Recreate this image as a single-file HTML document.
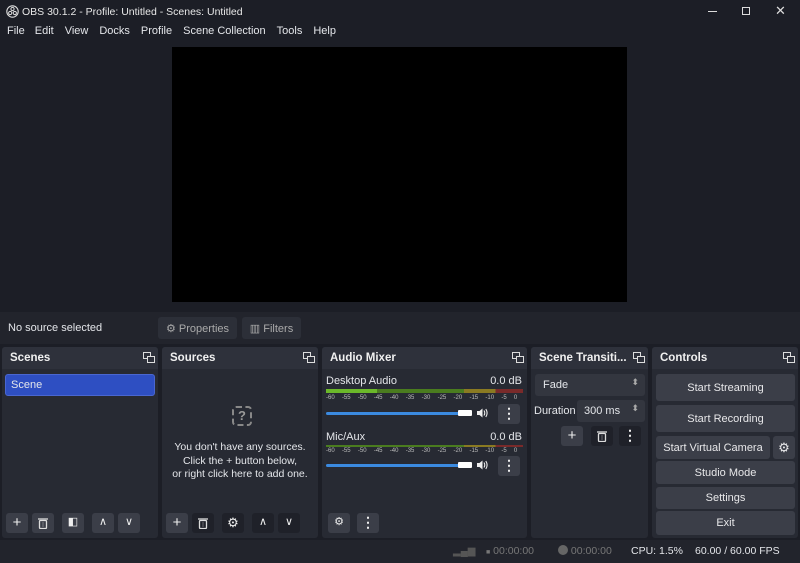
<!DOCTYPE html>
<html><head><meta charset="utf-8"><style>
*{margin:0;padding:0;box-sizing:border-box}
body{width:800px;height:563px;background:#1c1e26;font-family:"Liberation Sans",sans-serif;color:#e4e6ea;font-size:11px;position:relative;overflow:hidden}
.a{position:absolute}
.dock{position:absolute;top:347px;height:191px;background:#272a33;border-radius:3px}
.hd{position:absolute;left:0;right:0;top:0;height:22px;background:#2e313b;border-radius:3px 3px 0 0;font-weight:bold;font-size:11.5px;padding:5px 0 0 8px;color:#f0f0f0}
.btn{position:absolute;background:#3b3e48;border-radius:3px;text-align:center;color:#e8e8ea;font-size:11px}
.ib{position:absolute;width:22px;height:20px;background:#3b3e48;border-radius:3px;color:#eee;text-align:center;font-size:15px;line-height:19px}
.ib.d{background:#1f2129}
.ib svg{position:absolute;left:5px;top:4px}
.sc{font-size:6px;color:#bbb}
</style></head><body>
<svg width="0" height="0" style="position:absolute"><defs>
<g id="f"><rect x="0.5" y="0.5" width="7" height="6" fill="none" stroke="#ddd"/><rect x="4.5" y="4.5" width="7" height="6" fill="#2e313b" stroke="#ddd"/></g>
<g id="t"><rect x="2.5" y="3.5" width="7" height="8" rx="1" fill="none" stroke="#ddd" stroke-width="1.3"/><line x1="1" y1="2" x2="11" y2="2" stroke="#ddd" stroke-width="1.3"/><line x1="6" y1="5" x2="6" y2="10" stroke="#ddd" stroke-width="0.8" opacity="0.5"/></g>
<g id="s"><path d="M1 4h2.5l3-2.5v9l-3-2.5H1z" fill="#eee"/><path d="M8 3.5q1.5 2.5 0 5M9.8 2q2.6 4 0 8" fill="none" stroke="#eee" stroke-width="1.1"/></g>
</defs></svg>
<!-- title -->
<svg class="a" style="left:6px;top:5px" width="13" height="13" viewBox="0 0 13 13"><circle cx="6.5" cy="6.5" r="5.7" fill="none" stroke="#ddd" stroke-width="1.1"/><circle cx="6.5" cy="4" r="1.6" fill="none" stroke="#ddd"/><circle cx="4.2" cy="8" r="1.6" fill="none" stroke="#ddd"/><circle cx="8.8" cy="8" r="1.6" fill="none" stroke="#ddd"/></svg>
<div class="a" style="left:22px;top:6px;font-size:10.5px;color:#e8e8e8">OBS 30.1.2 - Profile: Untitled - Scenes: Untitled</div>
<div class="a" style="left:708px;top:11px;width:9px;height:1px;background:#ddd"></div>
<div class="a" style="left:742px;top:7px;width:8px;height:8px;border:1px solid #ddd"></div>
<div class="a" style="left:775px;top:3px;font-size:13px;color:#ddd">✕</div>
<!-- menu -->
<div class="a" style="top:25px;left:7px;font-size:11px">
<span style="margin-right:10px">File</span><span style="margin-right:11px">Edit</span><span style="margin-right:11px">View</span><span style="margin-right:11px">Docks</span><span style="margin-right:11px">Profile</span><span style="margin-right:11px">Scene Collection</span><span style="margin-right:11px">Tools</span><span>Help</span></div>
<div class="a" style="left:172px;top:47px;width:455px;height:255px;background:#000"></div>
<!-- source bar -->
<div class="a" style="left:0;top:312px;width:800px;height:32px;background:#22242c"></div>
<div class="a" style="left:8px;top:322px">No source selected</div>
<div class="btn" style="left:158px;top:317px;width:79px;height:22px;background:#2c2f38;padding-top:5px;color:#aaa">⚙ Properties</div>
<div class="btn" style="left:242px;top:317px;width:59px;height:22px;background:#2c2f38;padding-top:5px;color:#aaa">▥ Filters</div>
<!-- Scenes -->
<div class="dock" style="left:2px;width:156px"><div class="hd">Scenes</div>
<div class="a" style="left:3px;top:27px;width:150px;height:22px;background:#2e4fc2;border-radius:3px;padding:4px 0 0 5px;border:1px solid #4a67d0">Scene</div>
<div class="ib" style="left:4px;top:166px">+</div><div class="ib" style="left:30px;top:166px"><svg width="12" height="12"><use href="#t"/></svg></div><div class="ib" style="left:60px;top:166px;font-size:11px">◧</div><div class="ib" style="left:90px;top:166px;font-size:11px">∧</div><div class="ib" style="left:116px;top:166px;font-size:11px">∨</div>
</div>
<!-- Sources -->
<div class="dock" style="left:162px;width:156px"><div class="hd">Sources</div>
<div class="a" style="left:70px;top:59px;width:20px;height:20px;border:2px dashed #888;border-radius:4px;color:#999;text-align:center;font-weight:bold;font-size:13px;line-height:16px">?</div>
<div class="a" style="left:0;width:156px;top:94px;text-align:center;line-height:13.5px;font-size:10.5px">You don't have any sources.<br>Click the + button below,<br>or right click here to add one.</div>
<div class="ib" style="left:4px;top:166px">+</div><div class="ib d" style="left:30px;top:166px"><svg width="12" height="12"><use href="#t"/></svg></div><div class="ib d" style="left:60px;top:166px;font-size:13px">⚙</div><div class="ib d" style="left:90px;top:166px;font-size:11px">∧</div><div class="ib d" style="left:116px;top:166px;font-size:11px">∨</div>
</div>
<!-- Audio mixer -->
<div class="dock" style="left:322px;width:205px"><div class="hd">Audio Mixer</div>
<div class="a" style="left:4px;top:28px">Desktop Audio</div><div class="a" style="right:5px;top:28px">0.0 dB</div>
<div class="a" style="left:4px;top:42px;width:197px;height:4px;background:linear-gradient(90deg,#6bb82a 0,#6bb82a 26%,#4a7c1f 26%,#4a7c1f 70%,#8a7a22 70%,#8a7a22 86%,#7a2a2a 86%)"></div>
<div class="a sc" style="left:4px;top:48px;width:200px;word-spacing:5.6px">-60 -55 -50 -45 -40 -35 -30 -25 -20 -15 -10 -5 0</div>
<div class="a" style="left:4px;top:65px;width:135px;height:3px;background:#3b8ae0;border-radius:2px"></div>
<div class="a" style="left:136px;top:63px;width:14px;height:6px;background:#fff;border-radius:1px"></div>
<svg class="a" style="left:154px;top:60px" width="13" height="12"><use href="#s"/></svg>
<div class="ib" style="left:176px;top:57px;font-size:14px;font-weight:bold">⋮</div>
<div class="a" style="left:4px;top:84px">Mic/Aux</div><div class="a" style="right:5px;top:84px">0.0 dB</div>
<div class="a" style="left:4px;top:98px;width:197px;height:2px;background:linear-gradient(90deg,#4a7c1f 70%,#8a7a22 70%,#8a7a22 86%,#7a2a2a 86%)"></div>
<div class="a sc" style="left:4px;top:101px;width:200px;word-spacing:5.6px">-60 -55 -50 -45 -40 -35 -30 -25 -20 -15 -10 -5 0</div>
<div class="a" style="left:4px;top:117px;width:135px;height:3px;background:#3b8ae0;border-radius:2px"></div>
<div class="a" style="left:136px;top:115px;width:14px;height:6px;background:#fff;border-radius:1px"></div>
<svg class="a" style="left:154px;top:112px" width="13" height="12"><use href="#s"/></svg>
<div class="ib" style="left:176px;top:109px;font-size:14px;font-weight:bold">⋮</div>
<div class="ib" style="left:6px;top:166px;font-size:11px">⚙</div><div class="ib" style="left:35px;top:166px;font-size:14px;font-weight:bold">⋮</div>
</div>
<!-- transitions -->
<div class="dock" style="left:531px;width:117px"><div class="hd">Scene Transiti...</div>
<div class="a" style="left:4px;top:27px;width:110px;height:22px;background:#33363f;border-radius:3px;padding:5px 0 0 8px">Fade<span style="position:absolute;right:6px;top:3px;font-size:9px;color:#aaa">⬍</span></div>
<div class="a" style="left:3px;top:58px">Duration</div>
<div class="a" style="left:46px;top:53px;width:68px;height:22px;background:#33363f;border-radius:3px;padding:5px 0 0 7px">300 ms<span style="position:absolute;right:6px;top:3px;font-size:9px;color:#aaa">⬍</span></div>
<div class="ib" style="left:30px;top:79px">+</div><div class="ib d" style="left:60px;top:79px"><svg width="12" height="12"><use href="#t"/></svg></div><div class="ib d" style="left:88px;top:79px;font-size:14px;font-weight:bold">⋮</div>
</div>
<!-- controls -->
<div class="dock" style="left:652px;width:146px"><div class="hd">Controls</div>
<div class="btn" style="left:4px;top:27px;width:139px;height:27px;padding-top:8px">Start Streaming</div>
<div class="btn" style="left:4px;top:58px;width:139px;height:27px;padding-top:8px">Start Recording</div>
<div class="btn" style="left:4px;top:89px;width:114px;height:23px;padding-top:6px">Start Virtual Camera</div>
<div class="btn" style="left:121px;top:89px;width:22px;height:23px;padding-top:4px;font-size:13px">⚙</div>
<div class="btn" style="left:4px;top:114px;width:139px;height:23px;padding-top:6px">Studio Mode</div>
<div class="btn" style="left:4px;top:140px;width:139px;height:22px;padding-top:5px">Settings</div>
<div class="btn" style="left:4px;top:164px;width:139px;height:24px;padding-top:6px">Exit</div>
</div>
<svg class="a" style="left:143px;top:352px" width="12" height="11"><use href="#f"/></svg>
<svg class="a" style="left:303px;top:352px" width="12" height="11"><use href="#f"/></svg>
<svg class="a" style="left:512px;top:352px" width="12" height="11"><use href="#f"/></svg>
<svg class="a" style="left:633px;top:352px" width="12" height="11"><use href="#f"/></svg>
<svg class="a" style="left:783px;top:352px" width="12" height="11"><use href="#f"/></svg>
<!-- status -->
<div class="a" style="left:0;top:540px;width:800px;height:23px;background:#22242c"></div>
<div class="a" style="left:453px;top:546px;font-size:10px;color:#555">▂▄▆</div>
<div class="a" style="left:486px;top:545px;color:#777;font-size:10.5px"><span style="font-size:7px">■</span> 00:00:00</div>
<div class="a" style="left:558px;top:545px;color:#777;font-size:10.5px"><span style="display:inline-block;width:10px;height:10px;border-radius:50%;background:#666;vertical-align:-1px"></span> 00:00:00</div>
<div class="a" style="left:631px;top:545px;font-size:10.5px">CPU: 1.5%</div>
<div class="a" style="left:695px;top:545px;font-size:10.5px">60.00 / 60.00 FPS</div>
</body></html>
